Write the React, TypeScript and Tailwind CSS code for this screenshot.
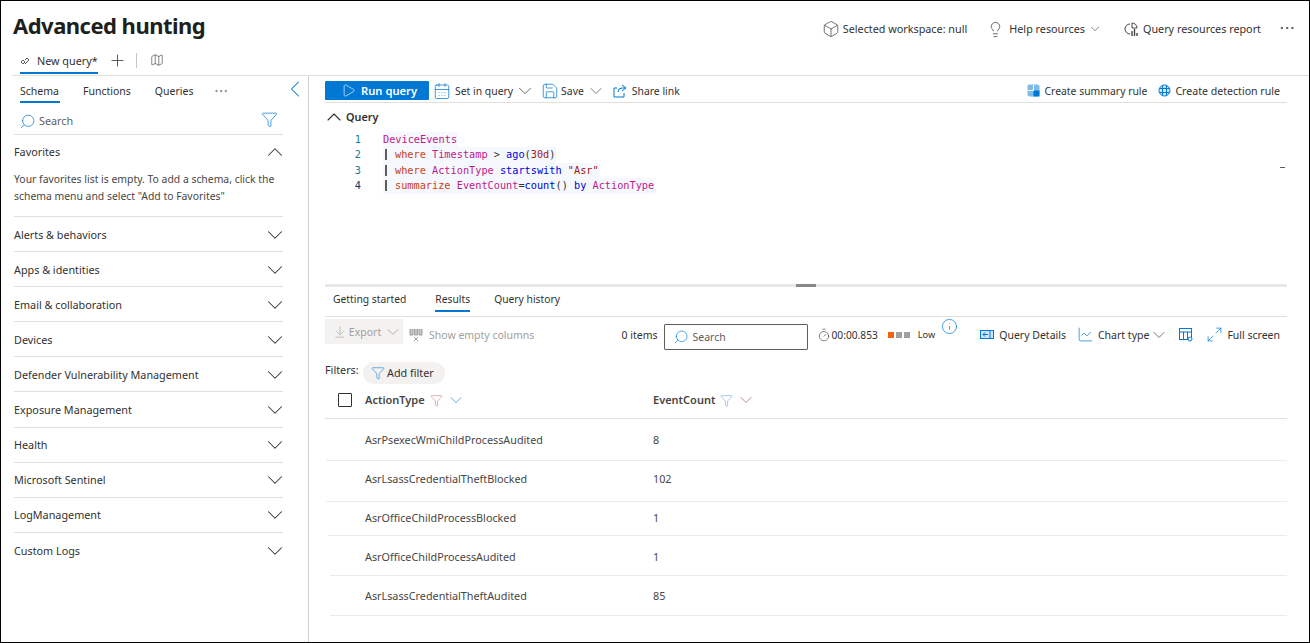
import {
  ArrowDownToLine,
  CalendarDays,
  ChevronDown,
  ChevronLeft,
  ChevronUp,
  Ellipsis,
  Filter,
  Lightbulb,
  Map as MapIcon,
  Play,
  Plus,
  Save,
  Search,
  Timer,
  Box,
  Maximize2,
  ChartLine,
  Info,
} from "lucide-react";

const schemas = [
  "Alerts & behaviors",
  "Apps & identities",
  "Email & collaboration",
  "Devices",
  "Defender Vulnerability Management",
  "Exposure Management",
  "Health",
  "Microsoft Sentinel",
  "LogManagement",
  "Custom Logs",
];

// row heights are uneven in the picture, so each row carries its own classes
const results = [
  { action: "AsrPsexecWmiChildProcessAudited", count: "8", row: "h-[42px] pt-[13px] ml-px", cell: "w-[327px] pl-[39px]" },
  { action: "AsrLsassCredentialTheftBlocked", count: "102", row: "h-[41px] pt-[10px] ml-px", cell: "w-[327px] pl-[39px]" },
  { action: "AsrOfficeChildProcessBlocked", count: "1", row: "h-[34px] pt-[8px] ml-[3px]", cell: "w-[325px] pl-[37px]" },
  { action: "AsrOfficeChildProcessAudited", count: "1", row: "h-[40px] pt-[13px] ml-[5px]", cell: "w-[323px] pl-[35px]" },
  { action: "AsrLsassCredentialTheftAudited", count: "85", row: "h-[40px] pt-[12px] ml-[5px]", cell: "w-[323px] pl-[35px]" },
];

function Pipe() {
  return <span className="inline-block w-[2px] h-[11px] bg-[#605e5c] ml-[2px] mr-[8px] align-[-2px]" />;
}

function QueryReportIcon() {
  return (
    <svg width="14" height="15" viewBox="0 0 14 15" fill="none" stroke="#484644">
      <path d="M6 2a5 5 0 1 0 0 10M8 1v5h5a5 5 0 0 0-5-5z" />
      <path d="M8 14V9M10.5 14V7M13 14v-3" strokeWidth="1.4" />
    </svg>
  );
}

function App() {
  return (
    <div className="w-[1310px] h-[643px] overflow-hidden border border-black bg-white text-[10.8px] leading-[16px] text-[#323130] font-['Noto_Sans',sans-serif] flex flex-col">
      {/* Header */}
      <div className="h-[45px] shrink-0 flex justify-between pl-3 pr-[13px]">
        <h1 className="mt-[7px] text-[22px] leading-[34px] tracking-[-0.52px] font-bold text-[#201f1e]">Advanced hunting</h1>
        <div className="flex items-start pt-[20px]">
          <span className="h-4 flex items-center gap-[3px]"><Box size={18} strokeWidth={1} className="text-[#484644]" />Selected workspace: null</span>
          <span className="h-4 ml-[20px] flex items-center gap-[5px]"><Lightbulb size={17} strokeWidth={1} />Help resources<ChevronDown size={14} strokeWidth={1} className="ml-[-3px] translate-x-[1px]" /></span>
          <span className="h-4 ml-[23px] flex items-center gap-[5px]"><QueryReportIcon />Query resources report</span>
          <Ellipsis size={18} strokeWidth={1} className="ml-[17px] -mt-[2px]" />
        </div>
      </div>

      {/* Query tabs */}
      <div className="h-[30px] shrink-0 ml-[11px] flex items-start border-b border-[#e1dfdd]">
        <div className="ml-[8px] w-[78px] h-[28px] pt-[4px] flex items-center gap-[7px] border-b-2 border-[#0078d4]">
          <svg width="10" height="9" viewBox="0 0 10 9" fill="none" stroke="#605e5c"><path d="M1 5l2-2 2 2-2 2zM5 3l2-2 2 2-4 4" /></svg>
          <span>New query*</span>
        </div>
        <Plus size={19} strokeWidth={1} className="ml-[10px] mt-[5px]" />
        <div className="w-px h-[15px] bg-[#c8c6c4] ml-[9px] mt-[7px]" />
        <MapIcon size={14} strokeWidth={1} className="ml-[13px] mt-[7px]" />
      </div>

      <div className="flex flex-1 min-h-0">
        {/* Schema panel */}
        <aside className="w-[308px] shrink-0 border-r border-[#d2d0ce] pl-[13px] pr-[25px] relative">
          <div className="h-[27px] flex items-start pl-[6px] text-[10.5px]">
            <span className="w-[40px] h-[27px] pt-[7px] border-b-2 border-[#0078d4] whitespace-nowrap">Schema</span>
            <span className="ml-[23px] pt-[7px]">Functions</span>
            <span className="ml-[24px] pt-[7px]">Queries</span>
            <Ellipsis size={16} strokeWidth={1} className="ml-[20px] mt-[7px] text-[#605e5c]" />
          </div>
          <ChevronLeft size={28} strokeWidth={0.9} className="absolute right-[-1px] top-[-1px] text-[#0078d4]" />
          <div className="h-[32px] pt-[5px] flex items-center justify-between pl-[5px] pr-[5px] border-b border-[#e1dfdd]">
            <span className="flex items-center gap-[3px]"><Search size={17} strokeWidth={1} className="text-[#0078d4] -scale-x-100" /><span className="text-[#605e5c]">Search</span></span>
            <Filter size={17} strokeWidth={1} className="text-[#0078d4] -mt-[4px]" />
          </div>
          <div className="h-[82px] border-b border-[#e1dfdd]">
            <div className="h-[34px] flex items-center justify-between">
              <span>Favorites</span>
              <ChevronUp size={26} strokeWidth={0.95} className="-mr-[5px]" />
            </div>
            <p className="mt-[2px] text-[10.4px] text-[#484644] leading-[17px] whitespace-nowrap">
              Your favorites list is empty. To add a schema, click the
              <br />
              schema menu and select "Add to Favorites"
            </p>
          </div>
          {schemas.map((name) => (
            <div key={name} className="h-[35.1px] pt-[1px] flex items-center justify-between border-b border-[#e1dfdd] last:border-b-0">
              <span>{name}</span>
              <ChevronDown size={26} strokeWidth={0.95} className="-mr-[5px]" />
            </div>
          ))}
        </aside>

        {/* Query panel */}
        <main className="flex-1 min-w-0 pl-[16px] pr-[22px]">
          <div className="h-[27px] pt-[5px] pb-[2px] flex items-center border-b border-[#e1dfdd] text-[10.4px]">
            <button className="w-[104px] h-[19px] bg-[#0078d4] text-white rounded-[1px] flex items-center pl-[16px] gap-[5px] font-semibold text-[11.2px]">
              <Play size={15} strokeWidth={1} />Run query
            </button>
            <CalendarDays size={18} strokeWidth={1} className="ml-[4px] text-[#0078d4]" />
            <span className="ml-[4px]">Set in query</span>
            <ChevronDown size={22} strokeWidth={1} className="ml-[1px] text-[#605e5c]" />
            <Save size={18} strokeWidth={1} className="ml-[5px] text-[#0078d4]" />
            <span className="ml-[2px]">Save</span>
            <ChevronDown size={20} strokeWidth={1} className="ml-[2px] text-[#605e5c]" />
            <svg className="ml-[7px]" width="14" height="14" viewBox="0 0 14 14" fill="none" stroke="#0078d4"><path d="M9 1l4 3-4 3M13 4H9a4 4 0 0 0-4 4M11 9v4H1V4h3" /></svg>
            <span className="ml-[5px]">Share link</span>
            <span className="ml-auto flex items-center gap-[5px]">
              <svg width="13" height="13" viewBox="0 0 13 13"><rect x="0.5" y="0.5" width="12" height="12" rx="2" fill="#7fbbe8" /><rect x="6.5" y="6.5" width="6" height="6" fill="#0078d4" /><path d="M6.5 1v5.5H1" stroke="#fff" fill="none" /></svg>
              Create summary rule
            </span>
            <span className="ml-[11px] flex items-center gap-[4px] pr-[7px] text-[10.6px]">
              <svg width="13" height="13" viewBox="0 0 13 13" fill="none" stroke="#0078d4"><circle cx="6.5" cy="6.5" r="5.5" fill="#cfe4f6" /><path d="M4.5 1.5v10M8.5 1.5v10M1.5 4.5h10M1.5 8.5h10" /></svg>
              Create detection rule
            </span>
          </div>

          <div className="h-[28px] flex items-center font-semibold -ml-[3px]">
            <ChevronUp size={24} strokeWidth={1.1} />Query
          </div>

          {/* Editor */}
          <div className="h-[153px] pt-[1px] font-['DejaVu_Sans_Mono',monospace] text-[10.25px] leading-[15.4px] relative">
            {[
              <span className="text-[#c2188b]">DeviceEvents</span>,
              <><Pipe /><span className="text-[#c8401a]">where</span> <span className="text-[#c2188b]">Timestamp</span> {">"} <span className="text-[#0000e0]">ago</span>(<span className="text-[#a31515]">30d</span>)</>,
              <><Pipe /><span className="text-[#c8401a]">where</span> <span className="text-[#c2188b]">ActionType</span> <span className="text-[#0000e0]">startswith</span> <span className="text-[#a31515]">"Asr"</span></>,
              <><Pipe /><span className="text-[#c8401a]">summarize</span> <span className="text-[#c2188b]">EventCount</span>=<span className="text-[#0000e0]">count</span>() <span className="text-[#0000e0]">by</span> <span className="text-[#c2188b]">ActionType</span></>,
            ].map((line, i) => (
              <div key={i} className="flex">
                <span className={`w-[37px] pr-[1px] text-right ${i === 3 ? "text-[#1b2f5e]" : "text-[#237893]"}`}>{i + 1}</span>
                <span className="ml-[21px] whitespace-pre bg-[#f5f9fd] pr-[1px]">{line}</span>
              </div>
            ))}
            <div className="absolute right-[2px] top-[36px] w-[5px] h-px bg-[#605e5c]" />
          </div>

          {/* Splitter */}
          <div className="h-[3px] bg-[#e9e8e7] flex justify-center">
            <div className="w-[20px] h-[3px] bg-[#8a8886]" />
          </div>

          <div className="h-[30px] flex items-start border-b border-[#e1dfdd] pl-[8px] text-[10.3px]">
            <span className="pt-[4px]">Getting started</span>
            <span className="ml-[29px] h-[25px] pt-[4px] border-b-2 border-[#0078d4]">Results</span>
            <span className="ml-[24px] pt-[4px]">Query history</span>
          </div>

          {/* Results toolbar */}
          <div className="h-[37px] pb-[2px] flex items-center text-[10.5px]">
            <div className="-mt-[6px] w-[78px] h-[25px] bg-[#f3f2f1] text-[#a19f9d] flex items-center pl-[8px] gap-[2px]">
              <ArrowDownToLine size={14} strokeWidth={1} />Export<ChevronDown size={20} strokeWidth={1} />
            </div>
            <svg className="ml-[6px]" width="14" height="14" viewBox="0 0 14 14" fill="none" stroke="#a19f9d"><path d="M1 1v6h3V1M5.5 1v6h3V1M10 1v6h3V1" fill="#c8c6c4" /><path d="M5 9l4 4M9 9l-4 4" /></svg>
            <span className="ml-[6px] text-[#a19f9d]">Show empty columns</span>
            <span className="ml-auto">0 items</span>
            <div className="ml-[6px] w-[144px] h-[26px] border border-[#605e5c] rounded-[1px] flex items-center pl-[8px] gap-[4px] mt-[5px]">
              <Search size={16} strokeWidth={1} className="text-[#0078d4] -scale-x-100" /><span className="text-[#605e5c]">Search</span>
            </div>
            <Timer size={14} strokeWidth={1} className="ml-[9px]" />
            <span className="ml-[1px] text-[10.2px]">00:00.853</span>
            <span className="ml-[10px] flex gap-[2px]">
              <i className="size-[6px] bg-[#f7630c]" /><i className="size-[6px] bg-[#a19f9d]" /><i className="size-[6px] bg-[#a19f9d]" />
            </span>
            <span className="ml-[8px] text-[9.2px] mt-[1px]">Low</span>
            <Info size={17} strokeWidth={1} className="ml-[6px] -mt-[17px] text-[#0078d4]" />
            <svg className="ml-[22px]" width="14" height="10" viewBox="0 0 14 10" fill="#cfe4f6" stroke="#0078d4"><rect x="0.5" y="0.5" width="13" height="8" /><path d="M3 4.5h5M5 2.5l-2 2 2 2M10 1v7" fill="none" /></svg>
            <span className="ml-[5px]">Query Details</span>
            <ChartLine size={17} strokeWidth={1} className="ml-[11px] text-[#0078d4]" />
            <span className="ml-[4px]">Chart type</span>
            <ChevronDown size={20} strokeWidth={1} className="text-[#605e5c]" />
            <svg className="ml-[10px]" width="14" height="14" viewBox="0 0 14 14" fill="none" stroke="#0078d4"><rect x="0.5" y="0.5" width="12" height="11" /><path d="M0.5 4h12M4.5 4v8M8.5 4v8" /><circle cx="11" cy="11" r="2" fill="#fff" /></svg>
            <Maximize2 size={17} strokeWidth={1} className="ml-[13px] text-[#0078d4]" />
            <span className="ml-[4px] pr-[7px]">Full screen</span>
          </div>

          {/* Filters */}
          <div className="h-[30px] flex items-start">
            <span className="w-[32px] pt-[8px] whitespace-nowrap">Filters:</span>
            <span className="ml-[6px] mt-[8px] h-[22px] w-[82px] rounded-full bg-[#f3f2f1] flex items-center pl-[8px] gap-[2px]">
              <Filter size={14} strokeWidth={1} className="text-[#0078d4]" />Add filter
            </span>
          </div>

          {/* Results table */}
          <div className="h-[35px] flex items-center border-b border-[#e1dfdd] font-semibold text-[#484644] pb-[2px] text-[11px]">
            <div className="ml-[13px] size-[14px] border border-[#323130] rounded-[1px]" />
            <span className="ml-[13px] w-[288px] flex items-center">
              ActionType
              <Filter size={13} strokeWidth={1} className="ml-[5px] text-[#c4706f]" />
              <ChevronDown size={20} strokeWidth={1} className="ml-[3px] text-[#5a8fc4]" />
            </span>
            <span className="flex items-center">
              EventCount
              <Filter size={13} strokeWidth={1} className="ml-[5px] text-[#5a9bd4]" />
              <ChevronDown size={20} strokeWidth={1} className="ml-[3px] text-[#b5706a]" />
            </span>
          </div>
          {results.map(({ action, count, row, cell }) => (
            <div key={action} className={`flex border-b border-[#edebe9] text-[#484644] text-[10.8px] ${row}`}>
              <span className={`${cell} shrink-0`}>{action}</span>
              <span>{count}</span>
            </div>
          ))}
        </main>
      </div>
    </div>
  );
}

export default App;
